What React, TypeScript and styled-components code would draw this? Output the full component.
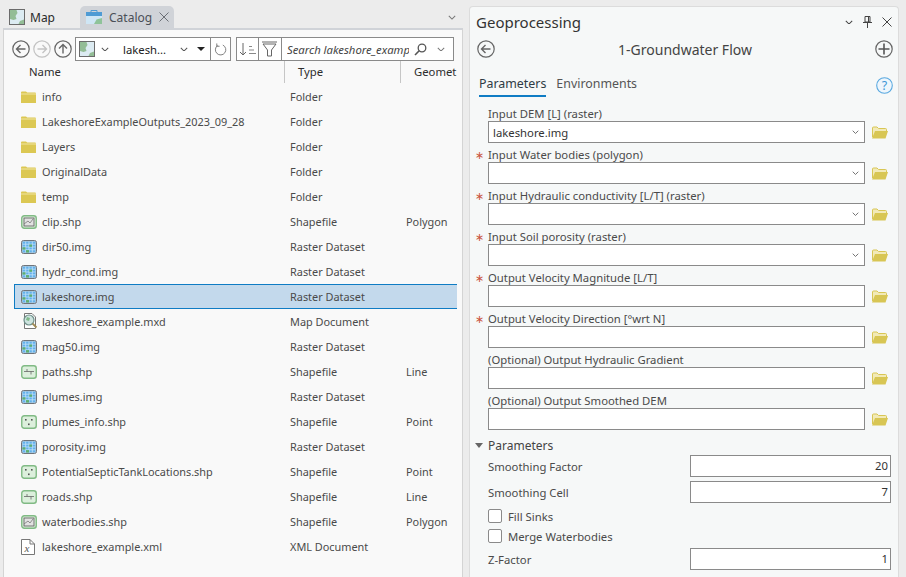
import React from "react";
import styled, { createGlobalStyle } from "styled-components";

const GlobalStyle = createGlobalStyle`
  html, body { margin: 0; padding: 0; height: 100%; overflow: hidden; }
  body { background: #ececec; font-family: "Noto Sans", "Open Sans", sans-serif; font-size: 11.3px; color: #3c3c3c; }
  svg { flex: none; display: block; }
`;

/* ---------- icons ---------- */

const MapIcon = () => (
  <svg width="16" height="16" viewBox="0 0 16 16">
    <rect x="0.5" y="0.5" width="15" height="15" fill="#dcebf2" stroke="#6b6b6b" />
    <path d="M1 1h6.5l1 3-2 3 1 3-3 1-3.5-1z" fill="#93bd96" />
    <path d="M9.5 15l1.5-3 4-1.5V15z" fill="#93bd96" />
  </svg>
);

const CatalogIcon = () => (
  <svg width="16" height="16" viewBox="0 0 16 16">
    <path d="M5 3.5V1.5h6v2" fill="none" stroke="#4f9bd4" />
    <rect x="0" y="3" width="16" height="4" fill="#4f9bd4" />
    <rect x="0" y="7" width="16" height="8" fill="#cfe6f5" />
    <path d="M8 15l2.5-4.5L16 9v6z" fill="#8fc39a" />
  </svg>
);

const CircleButton = ({ kind, faded }: { kind: "left" | "right" | "up" | "plus"; faded?: boolean }) => {
  const c = faded ? "#c3c3c3" : "#666";
  const paths = {
    left: "M13.5 9h-9M8.5 5l-4 4 4 4",
    right: "M4.5 9h9M9.5 5l4 4-4 4",
    up: "M9 13.5v-9M5 8.5l4-4 4 4",
    plus: "M9 3.5v11M3.5 9h11",
  };
  return (
    <svg width="18" height="18" viewBox="0 0 18 18">
      <circle cx="9" cy="9" r="8.2" fill="none" stroke={c} strokeWidth="1.2" />
      <path d={paths[kind]} fill="none" stroke={kind === "plus" ? "#555" : c} strokeWidth={kind === "plus" ? 1.6 : 1.4} />
    </svg>
  );
};

const Chevron = ({ w = 8, color = "#555" }: { w?: number; color?: string }) => (
  <svg width={w} height={w * 0.6} viewBox="0 0 10 6">
    <path d="M1 1l4 4 4-4" fill="none" stroke={color} strokeWidth="1.3" />
  </svg>
);

const FolderIcon = () => (
  <svg width="15" height="12" viewBox="0 0 15 12">
    <path d="M0 1.5Q0 .5 1 .5H5L6.2 1.5H14Q15 1.5 15 2.5V12H0z" fill="#dcc853" />
    <path d="M0 3h15" stroke="#f2e9ae" strokeWidth="0.9" />
  </svg>
);

const OpenFolderIcon = () => (
  <svg width="16" height="13" viewBox="0 0 16 13">
    <path d="M0.5 11V2Q0.5 1 1.5 1H5l1.5 1.5H13.5Q14.5 2.5 14.5 3.5V5" fill="#f2eab8" stroke="#d8c654" />
    <path d="M0 12.5L3 5h13l-2.5 7.5z" fill="#d8c654" />
  </svg>
);

const RasterIcon = () => (
  <svg width="16" height="14" viewBox="0 0 16 14">
    <rect x="0.5" y="0.5" width="15" height="13" rx="2" fill="#c9ced3" stroke="#6f747a" />
    <rect x="1.5" y="1.5" width="13" height="11" fill="#62b1ec" />
    <path d="M4.7 1.5v11M8 1.5v11M11.3 1.5v11M1.5 4.2h13M1.5 7h13M1.5 9.8h13" stroke="#c5e2f8" strokeWidth="0.8" />
    <rect x="1.5" y="7.3" width="3" height="2.3" fill="#5fae6f" />
    <rect x="5" y="10.1" width="3" height="2.4" fill="#5fae6f" />
    <rect x="8.3" y="4.5" width="2.8" height="2.3" fill="#5fae6f" />
  </svg>
);

const ShapeBase = ({ children }: { children: React.ReactNode }) => (
  <svg width="16" height="14" viewBox="0 0 16 14">
    <rect x="0.75" y="0.75" width="14.5" height="12.5" rx="2.5" fill="#dcefdc" stroke="#80ba84" strokeWidth="1.4" />
    {children}
  </svg>
);

const PolygonIcon = () => (
  <ShapeBase>
    <rect x="3" y="3" width="10" height="8" fill="#e2e2e2" stroke="#666" strokeWidth="0.9" />
    <path d="M3 9l4-3 2 2 3-4" fill="none" stroke="#777" strokeWidth="0.8" />
  </ShapeBase>
);

const LineIcon = () => (
  <ShapeBase>
    <path d="M3 6.5h10M6 4V6.5M10 6.5V9.5" fill="none" stroke="#666" strokeWidth="0.8" />
  </ShapeBase>
);

const PointIcon = () => (
  <ShapeBase>
    <rect x="4" y="4" width="1.6" height="1.6" fill="#555" />
    <rect x="10" y="4" width="1.6" height="1.6" fill="#555" />
    <rect x="7" y="8.5" width="1.6" height="1.6" fill="#555" />
  </ShapeBase>
);

const MxdIcon = () => (
  <svg width="18" height="17" viewBox="0 0 18 17">
    <path d="M3.5 0.5H11l3.5 3.5V15.5H3.5z" fill="#fff" stroke="#777" />
    <circle cx="8" cy="7" r="5" fill="#cde3df" stroke="#6f8f8a" strokeWidth="1.2" />
    <path d="M6 4l3 1-1 3-3-1z" fill="#7fb98a" />
    <path d="M11.5 10.5l4 4" stroke="#a08a55" strokeWidth="1.8" />
  </svg>
);

const XmlIcon = () => (
  <svg width="14" height="16" viewBox="0 0 14 16">
    <path d="M0.5 0.5H9l4.5 4.5V15.5H0.5z" fill="#fff" stroke="#777" />
    <path d="M9 0.5V5h4.5" fill="none" stroke="#777" />
    <text x="3.5" y="12.5" fontFamily="Liberation Serif, serif" fontStyle="italic" fontSize="11" fill="#555">x</text>
  </svg>
);

const SortIcon = () => (
  <svg width="17" height="15" viewBox="0 0 17 15">
    <path d="M4 1v12M1 10l3 3 3-3" fill="none" stroke="#666" strokeWidth="1" />
    <path d="M10 4.5h3M10 8h5M10 11.5h7" stroke="#888" strokeWidth="1" />
  </svg>
);

const FilterIcon = () => (
  <svg width="18" height="16" viewBox="0 0 18 16">
    <path d="M1 1h15M2 3h13L10.5 9V15h-4V9z" fill="#fff" stroke="#666" strokeWidth="1" />
  </svg>
);

const RefreshIcon = () => (
  <svg width="13" height="13" viewBox="0 0 14 14">
    <path d="M9.5 2.2A5.6 5.6 0 1 1 4 2.6" fill="none" stroke="#777" strokeWidth="1" />
    <path d="M3 0.5v3h3" fill="none" stroke="#777" strokeWidth="1" />
  </svg>
);

const SearchIcon = () => (
  <svg width="13" height="13" viewBox="0 0 13 13">
    <circle cx="8" cy="5" r="3.8" fill="none" stroke="#555" strokeWidth="1.3" />
    <path d="M5.2 7.8L1 12" stroke="#555" strokeWidth="1.6" />
  </svg>
);

const PinIcon = () => (
  <svg width="9" height="12" viewBox="0 0 9 12">
    <path d="M2 .5h5v5.5H2zM0 6.5h9M4.5 6.5V12M5.5 1v5" fill="none" stroke="#444" strokeWidth="1" />
  </svg>
);

const CloseIcon = ({ color = "#444", size = 10 }: { color?: string; size?: number }) => (
  <svg width={size} height={size} viewBox="0 0 10 10">
    <path d="M.5.5l9 9M9.5.5l-9 9" stroke={color} strokeWidth="1" />
  </svg>
);

const HelpIcon = () => (
  <svg width="17" height="17" viewBox="0 0 17 17">
    <circle cx="8.5" cy="8.5" r="7.8" fill="#eef6fc" stroke="#5aa9e0" strokeWidth="1.1" />
    <text x="8.5" y="13" textAnchor="middle" fontFamily="Noto Sans, sans-serif" fontSize="12.5" fill="#3f97d6">?</text>
  </svg>
);

/* ---------- layout ---------- */

const Page = styled.div`
  width: 906px;
  height: 577px;
  display: flex;
  overflow: hidden;
  background: #ececec;
`;

const LeftColumn = styled.div`
  width: 463px;
  flex: none;
  display: flex;
  flex-direction: column;
  padding-left: 3px;
  box-sizing: border-box;
`;

const TabStrip = styled.div`
  height: 28px;
  flex: none;
  display: flex;
  align-items: flex-end;
  padding-left: 6px;
  position: relative;
`;

const Tab = styled.div<{ $active?: boolean }>`
  height: 22px;
  display: flex;
  align-items: center;
  gap: ${(p) => (p.$active ? 7 : 5)}px;
  box-sizing: border-box;
  padding: 0 6px 0 ${(p) => (p.$active ? 6 : 0)}px;
  font-size: 12px;
  border-radius: 5px 5px 0 0;
  color: ${(p) => (p.$active ? "#4a4f57" : "#2a2a2a")};
  background: ${(p) => (p.$active ? "#d0d3d8" : "transparent")};
  width: ${(p) => (p.$active ? "94px" : "71px")};
`;

const TabClose = styled.span`
  margin-left: auto;
  display: flex;
  padding-right: 1px;
`;

const TabMenu = styled.span`
  position: absolute;
  right: 7px;
  top: 15px;
  display: flex;
`;

const CatalogPanel = styled.div`
  flex: 1;
  background: #f9f9f9;
  border-top: 2px solid #d0d3d8;
  border-left: 1px solid #d4d4d4;
  border-right: 1px solid #d4d4d4;
  display: flex;
  flex-direction: column;
  min-height: 0;
`;

const Toolbar = styled.div`
  display: flex;
  align-items: center;
  height: 24px;
  margin: 7px 0 0 8px;
`;

const NavButtons = styled.div`
  display: flex;
  gap: 3px;
  margin-right: 3px;
`;

const PathBox = styled.div`
  width: 136px;
  height: 24px;
  box-sizing: border-box;
  border: 1px solid #8a8a8a;
  background: #fff;
  display: flex;
  align-items: center;
  padding-left: 3px;
  color: #222;
`;

const PathCrumb = styled.span`
  margin: 0 14px 0 6px;
  display: flex;
`;

const PathName = styled.span`
  width: 57px;
  white-space: nowrap;
`;

const DropCaret = styled.span`
  width: 0;
  height: 0;
  border-left: 4px solid transparent;
  border-right: 4px solid transparent;
  border-top: 4px solid #222;
  margin-left: 9px;
`;

const RefreshCell = styled.div`
  width: 20px;
  height: 24px;
  box-sizing: border-box;
  border: 1px solid #8a8a8a;
  border-left: 0;
  display: flex;
  align-items: center;
  justify-content: center;
  background: #fff;
`;

const SortCell = styled.div`
  width: 23px;
  height: 24px;
  margin-left: 5px;
  box-sizing: border-box;
  border: 1px solid #8a8a8a;
  display: flex;
  align-items: center;
  justify-content: center;
  background: #fff;
`;

const FilterCell = styled.div`
  width: 23px;
  height: 24px;
  box-sizing: border-box;
  border: 1px solid #8a8a8a;
  border-left: 0;
  display: flex;
  align-items: center;
  justify-content: center;
  background: #fff;
`;

const SearchBox = styled.div`
  width: 172px;
  height: 24px;
  box-sizing: border-box;
  border: 1px solid #8a8a8a;
  border-left: 0;
  background: #fff;
  display: flex;
  align-items: center;
  padding: 0 8px 0 5px;
  font-style: italic;
  font-size: 11.3px;
  color: #444;
  gap: 5px;
`;

const SearchText = styled.span`
  flex: 1;
  overflow: hidden;
  white-space: nowrap;
`;

const SearchCaret = styled.span`
  margin-left: 5px;
  display: flex;
`;

const HeaderRow = styled.div`
  display: grid;
  grid-template-columns: 280px 116px 1fr;
  height: 22px;
  overflow: hidden;
  color: #2d2d2d;
`;

const HeaderCell = styled.div<{ $divided?: boolean; $pad: number }>`
  padding-left: ${(p) => p.$pad}px;
  line-height: 22px;
  border-left: ${(p) => (p.$divided ? "1px solid #c6c6c6" : "0")};
  white-space: nowrap;
  overflow: hidden;
`;

const FileList = styled.div`
  display: flex;
  flex-direction: column;
  padding-top: 1px;
`;

const FileRow = styled.div<{ $selected?: boolean }>`
  display: grid;
  grid-template-columns: 275px 116px 1fr;
  align-items: center;
  height: 25px;
  box-sizing: border-box;
  margin: 0 5px 0 10px;
  border: 1px solid ${(p) => (p.$selected ? "#0f7cc4" : "transparent")};
  border-right: 0;
  background: ${(p) => (p.$selected ? "#c3d9ec" : "transparent")};
  color: #4a4a4a;
  font-size: 10.9px;
`;

const NameCell = styled.div`
  display: flex;
  align-items: center;
  padding-left: 6px;
  white-space: nowrap;
`;

const IconSlot = styled.span`
  width: 21px;
  flex: none;
  display: flex;
  align-items: center;
`;

const TypeCell = styled.div`
  white-space: nowrap;
`;

const GeoPanel = styled.div`
  width: 430px;
  flex: none;
  margin: 6px 0 0 6px;
  background: #f6f8f8;
  border: 1px solid #dcdcdc;
  border-bottom: 0;
  border-radius: 4px 4px 0 0;
  box-sizing: border-box;
  height: 571px;
  display: flex;
  flex-direction: column;
`;

const GeoHeader = styled.div`
  height: 30px;
  display: flex;
  align-items: center;
  padding: 0 6px 0 6px;
  flex: none;
`;

const GeoTitle = styled.div`
  font-size: 15px;
  color: #333;
  flex: 1;
`;

const GeoControls = styled.div`
  display: flex;
  align-items: center;
  gap: 10px;
`;

const ToolBar = styled.div`
  height: 24px;
  display: flex;
  align-items: center;
  justify-content: space-between;
  padding: 0 5px 0 7px;
  font-size: 14px;
  color: #444;
  flex: none;
`;

const Tabs = styled.div`
  display: flex;
  align-items: center;
  margin-top: 12px;
  padding: 0 5px 0 9px;
  gap: 10px;
  height: 24px;
  font-size: 12.4px;
  flex: none;
`;

const ParamTab = styled.div<{ $active?: boolean }>`
  height: 24px;
  line-height: 22px;
  box-sizing: border-box;
  color: ${(p) => (p.$active ? "#2f3b45" : "#555")};
  border-bottom: 2px solid ${(p) => (p.$active ? "#0f7cc4" : "transparent")};
`;

const HelpSlot = styled.span`
  margin-left: auto;
  display: flex;
`;

const Form = styled.div`
  display: flex;
  flex-direction: column;
  margin-top: 6px;
  padding-left: 18px;
`;

const Field = styled.div`
  height: 41px;
  display: flex;
  flex-direction: column;
  position: relative;
`;

const Required = styled.span`
  position: absolute;
  left: -13px;
  top: 5px;
  font-size: 11px;
  font-family: "DejaVu Sans", sans-serif;
  color: #c9553d;
  line-height: 14px;
`;

const Label = styled.div`
  height: 18px;
  line-height: 22px;
  color: #4a4a4a;
  white-space: nowrap;
`;

const InputLine = styled.div`
  display: flex;
  align-items: center;
  gap: 7px;
`;

const InputBox = styled.div`
  width: 377px;
  height: 22px;
  box-sizing: border-box;
  border: 1px solid #8a8a8a;
  background: #fff;
  display: flex;
  align-items: center;
  justify-content: space-between;
  padding: 0 5px 0 4px;
  color: #333;
`;

const SectionTitle = styled.div`
  display: flex;
  align-items: center;
  height: 20px;
  margin: 4px 0 0 -13px;
  gap: 5px;
  font-size: 12px;
  color: #444;
`;

const SectionCaret = styled.span`
  width: 0;
  height: 0;
  border-left: 4px solid transparent;
  border-right: 4px solid transparent;
  border-top: 5px solid #666;
`;

const ParamRow = styled.div<{ $top: number }>`
  display: flex;
  align-items: center;
  justify-content: space-between;
  width: 403px;
  height: 22px;
  margin-top: ${(p) => p.$top}px;
  color: #4a4a4a;
`;

const NumberBox = styled.div`
  width: 201px;
  height: 22px;
  box-sizing: border-box;
  border: 1px solid #8a8a8a;
  background: #fff;
  text-align: right;
  line-height: 20px;
  padding-right: 2px;
  color: #333;
`;

const CheckRow = styled.div<{ $top: number }>`
  display: flex;
  align-items: center;
  gap: 6px;
  height: 14px;
  margin-top: ${(p) => p.$top}px;
  color: #4a4a4a;
`;

const CheckBox = styled.span`
  width: 14px;
  height: 14px;
  box-sizing: border-box;
  border: 1px solid #8a8a8a;
  border-radius: 2px;
  background: #fff;
`;

/* ---------- data ---------- */

type Kind = "folder" | "polygon" | "raster" | "line" | "point" | "mxd" | "xml";

const files: { name: string; type: string; geom?: string; kind: Kind; selected?: boolean }[] = [
  { name: "info", type: "Folder", kind: "folder" },
  { name: "LakeshoreExampleOutputs_2023_09_28", type: "Folder", kind: "folder" },
  { name: "Layers", type: "Folder", kind: "folder" },
  { name: "OriginalData", type: "Folder", kind: "folder" },
  { name: "temp", type: "Folder", kind: "folder" },
  { name: "clip.shp", type: "Shapefile", geom: "Polygon", kind: "polygon" },
  { name: "dir50.img", type: "Raster Dataset", kind: "raster" },
  { name: "hydr_cond.img", type: "Raster Dataset", kind: "raster" },
  { name: "lakeshore.img", type: "Raster Dataset", kind: "raster", selected: true },
  { name: "lakeshore_example.mxd", type: "Map Document", kind: "mxd" },
  { name: "mag50.img", type: "Raster Dataset", kind: "raster" },
  { name: "paths.shp", type: "Shapefile", geom: "Line", kind: "line" },
  { name: "plumes.img", type: "Raster Dataset", kind: "raster" },
  { name: "plumes_info.shp", type: "Shapefile", geom: "Point", kind: "point" },
  { name: "porosity.img", type: "Raster Dataset", kind: "raster" },
  { name: "PotentialSepticTankLocations.shp", type: "Shapefile", geom: "Point", kind: "point" },
  { name: "roads.shp", type: "Shapefile", geom: "Line", kind: "line" },
  { name: "waterbodies.shp", type: "Shapefile", geom: "Polygon", kind: "polygon" },
  { name: "lakeshore_example.xml", type: "XML Document", kind: "xml" },
];

const kindIcons: Record<Kind, React.ReactNode> = {
  folder: <FolderIcon />,
  polygon: <PolygonIcon />,
  raster: <RasterIcon />,
  line: <LineIcon />,
  point: <PointIcon />,
  mxd: <MxdIcon />,
  xml: <XmlIcon />,
};

const fields: { label: string; required?: boolean; combo?: boolean; value?: string }[] = [
  { label: "Input DEM [L] (raster)", combo: true, value: "lakeshore.img" },
  { label: "Input Water bodies (polygon)", required: true, combo: true },
  { label: "Input Hydraulic conductivity [L/T] (raster)", required: true, combo: true },
  { label: "Input Soil porosity (raster)", required: true, combo: true },
  { label: "Output Velocity Magnitude [L/T]", required: true },
  { label: "Output Velocity Direction [°wrt N]", required: true },
  { label: "(Optional) Output Hydraulic Gradient" },
  { label: "(Optional) Output Smoothed DEM" },
];

export default function App() {
  return (
    <Page>
      <GlobalStyle />
      <LeftColumn>
        <TabStrip>
          <Tab>
            <MapIcon />
            Map
          </Tab>
          <Tab $active>
            <CatalogIcon />
            Catalog
            <TabClose>
              <CloseIcon color="#6b6f76" />
            </TabClose>
          </Tab>
          <TabMenu>
            <Chevron color="#777" />
          </TabMenu>
        </TabStrip>
        <CatalogPanel>
          <Toolbar>
            <NavButtons>
              <CircleButton kind="left" />
              <CircleButton kind="right" faded />
              <CircleButton kind="up" />
            </NavButtons>
            <PathBox>
              <MapIcon />
              <PathCrumb>
                <Chevron />
              </PathCrumb>
              <PathName>lakesh...</PathName>
              <Chevron />
              <DropCaret />
            </PathBox>
            <RefreshCell>
              <RefreshIcon />
            </RefreshCell>
            <SortCell>
              <SortIcon />
            </SortCell>
            <FilterCell>
              <FilterIcon />
            </FilterCell>
            <SearchBox>
              <SearchText>Search lakeshore_example</SearchText>
              <SearchIcon />
              <SearchCaret>
                <Chevron color="#777" />
              </SearchCaret>
            </SearchBox>
          </Toolbar>
          <HeaderRow>
            <HeaderCell $pad={25}>Name</HeaderCell>
            <HeaderCell $pad={13} $divided>Type</HeaderCell>
            <HeaderCell $pad={13} $divided>Geomet</HeaderCell>
          </HeaderRow>
          <FileList>
            {files.map((f) => (
              <FileRow key={f.name} $selected={f.selected}>
                <NameCell>
                  <IconSlot>{kindIcons[f.kind]}</IconSlot>
                  {f.name}
                </NameCell>
                <TypeCell>{f.type}</TypeCell>
                <TypeCell>{f.geom}</TypeCell>
              </FileRow>
            ))}
          </FileList>
        </CatalogPanel>
      </LeftColumn>
      <GeoPanel>
        <GeoHeader>
          <GeoTitle>Geoprocessing</GeoTitle>
          <GeoControls>
            <Chevron color="#444" />
            <PinIcon />
            <CloseIcon />
          </GeoControls>
        </GeoHeader>
        <ToolBar>
          <CircleButton kind="left" />
          1-Groundwater Flow
          <CircleButton kind="plus" />
        </ToolBar>
        <Tabs>
          <ParamTab $active>Parameters</ParamTab>
          <ParamTab>Environments</ParamTab>
          <HelpSlot>
            <HelpIcon />
          </HelpSlot>
        </Tabs>
        <Form>
          {fields.map((f) => (
            <Field key={f.label}>
              {f.required && <Required>∗</Required>}
              <Label>{f.label}</Label>
              <InputLine>
                <InputBox>
                  {f.value ?? <span />}
                  {f.combo && <Chevron w={7} color="#666" />}
                </InputBox>
                <OpenFolderIcon />
              </InputLine>
            </Field>
          ))}
          <SectionTitle>
            <SectionCaret />
            Parameters
          </SectionTitle>
          <ParamRow $top={0}>
            Smoothing Factor
            <NumberBox>20</NumberBox>
          </ParamRow>
          <ParamRow $top={4}>
            Smoothing Cell
            <NumberBox>7</NumberBox>
          </ParamRow>
          <CheckRow $top={6}>
            <CheckBox />
            Fill Sinks
          </CheckRow>
          <CheckRow $top={6}>
            <CheckBox />
            Merge Waterbodies
          </CheckRow>
          <ParamRow $top={5}>
            Z-Factor
            <NumberBox>1</NumberBox>
          </ParamRow>
        </Form>
      </GeoPanel>
    </Page>
  );
}
